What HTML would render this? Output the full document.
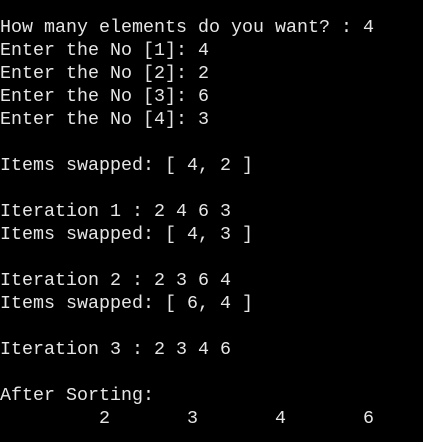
<!DOCTYPE html>
<html><head><meta charset="utf-8"><style>
html,body{margin:0;padding:0;background:#000;width:423px;height:442px;overflow:hidden}
pre{margin:0;padding:16px 0 0 0;font-family:"Liberation Mono",monospace;font-size:18.33px;line-height:23px;color:#e6e6e6;white-space:pre}
</style></head><body><pre>How many elements do you want? : 4
Enter the No [1]: 4
Enter the No [2]: 2
Enter the No [3]: 6
Enter the No [4]: 3

Items swapped: [ 4, 2 ]

Iteration 1 : 2 4 6 3
Items swapped: [ 4, 3 ]

Iteration 2 : 2 3 6 4
Items swapped: [ 6, 4 ]

Iteration 3 : 2 3 4 6

After Sorting:
         2       3       4       6</pre></body></html>
